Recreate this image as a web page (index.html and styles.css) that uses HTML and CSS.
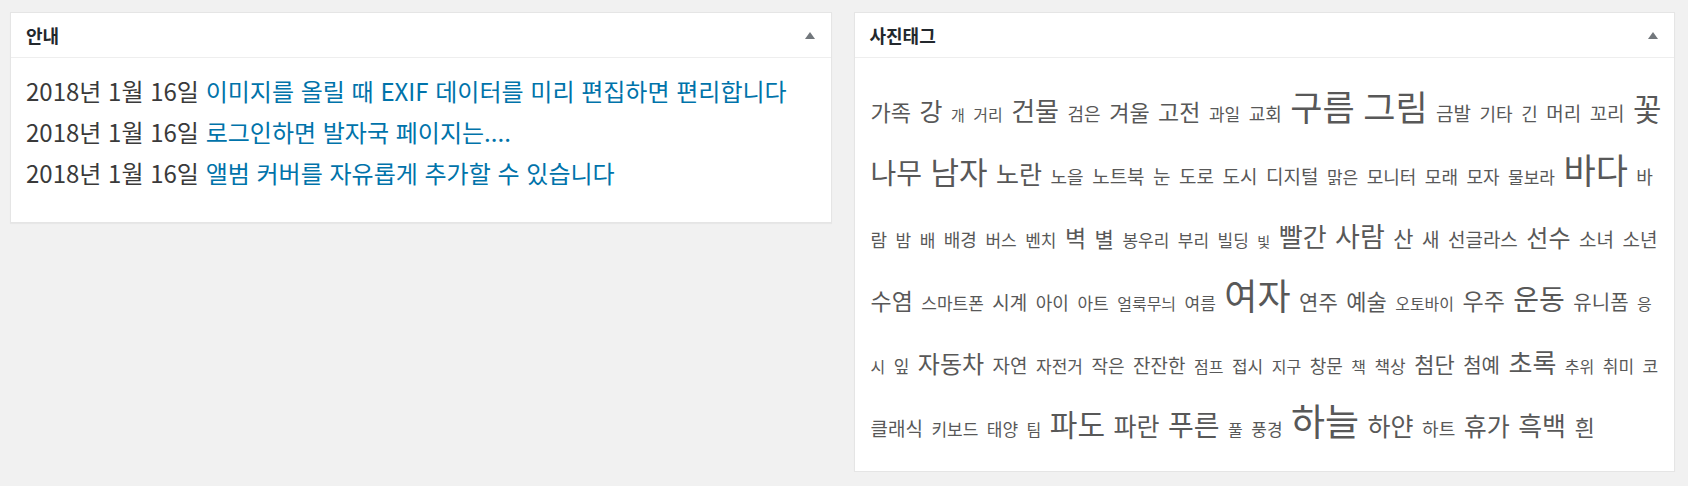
FILE: index.html
```html
<!DOCTYPE html>
<html lang="ko">
<head>
<meta charset="utf-8">
<title>대시보드</title>
<link rel="stylesheet" href="styles.css">
</head>
<body>
<div class="dashboard">
  <section class="postbox">
    <header class="postbox-header">
      <h2 class="postbox-title">안내</h2>
      <span class="toggle-indicator" aria-hidden="true"></span>
    </header>
    <div class="postbox-inside notice-inside">
      <ul class="notice-list">
        <li><span class="notice-date">2018년 1월 16일</span> <a href="#" class="notice-link">이미지를 올릴 때 EXIF 데이터를 미리 편집하면 편리합니다</a></li>
        <li><span class="notice-date">2018년 1월 16일</span> <a href="#" class="notice-link">로그인하면 발자국 페이지는....</a></li>
        <li><span class="notice-date">2018년 1월 16일</span> <a href="#" class="notice-link">앨범 커버를 자유롭게 추가할 수 있습니다</a></li>
      </ul>
    </div>
  </section>

  <section class="postbox">
    <header class="postbox-header">
      <h2 class="postbox-title">사진태그</h2>
      <span class="toggle-indicator" aria-hidden="true"></span>
    </header>
    <div class="postbox-inside tag-inside">
      <div class="tagcloud">
        <a href="#" class="tag" style="font-size:22px">가족</a>
        <a href="#" class="tag" style="font-size:25px">강</a>
        <a href="#" class="tag" style="font-size:15px">개</a>
        <a href="#" class="tag" style="font-size:16px">거리</a>
        <a href="#" class="tag" style="font-size:26px">건물</a>
        <a href="#" class="tag" style="font-size:18px">검은</a>
        <a href="#" class="tag" style="font-size:22px">겨울</a>
        <a href="#" class="tag" style="font-size:23px">고전</a>
        <a href="#" class="tag" style="font-size:17px">과일</a>
        <a href="#" class="tag" style="font-size:18px">교회</a>
        <a href="#" class="tag" style="font-size:35px">구름</a>
        <a href="#" class="tag" style="font-size:35px">그림</a>
        <a href="#" class="tag" style="font-size:19px">금발</a>
        <a href="#" class="tag" style="font-size:18px">기타</a>
        <a href="#" class="tag" style="font-size:18px">긴</a>
        <a href="#" class="tag" style="font-size:19px">머리</a>
        <a href="#" class="tag" style="font-size:19px">꼬리</a>
        <a href="#" class="tag" style="font-size:31px">꽃</a>
        <a href="#" class="tag" style="font-size:28px">나무</a>
        <a href="#" class="tag" style="font-size:31px">남자</a>
        <a href="#" class="tag" style="font-size:25px">노란</a>
        <a href="#" class="tag" style="font-size:18px">노을</a>
        <a href="#" class="tag" style="font-size:19px">노트북</a>
        <a href="#" class="tag" style="font-size:19px">눈</a>
        <a href="#" class="tag" style="font-size:19px">도로</a>
        <a href="#" class="tag" style="font-size:19px">도시</a>
        <a href="#" class="tag" style="font-size:19px">디지털</a>
        <a href="#" class="tag" style="font-size:17px">맑은</a>
        <a href="#" class="tag" style="font-size:18px">모니터</a>
        <a href="#" class="tag" style="font-size:18px">모래</a>
        <a href="#" class="tag" style="font-size:18px">모자</a>
        <a href="#" class="tag" style="font-size:17px">물보라</a>
        <a href="#" class="tag" style="font-size:35px">바다</a>
        <a href="#" class="tag" style="font-size:18px">바람</a>
        <a href="#" class="tag" style="font-size:17px">밤</a>
        <a href="#" class="tag" style="font-size:17px">배</a>
        <a href="#" class="tag" style="font-size:18px">배경</a>
        <a href="#" class="tag" style="font-size:17px">버스</a>
        <a href="#" class="tag" style="font-size:17px">벤치</a>
        <a href="#" class="tag" style="font-size:23px">벽</a>
        <a href="#" class="tag" style="font-size:21px">별</a>
        <a href="#" class="tag" style="font-size:17px">봉우리</a>
        <a href="#" class="tag" style="font-size:17px">부리</a>
        <a href="#" class="tag" style="font-size:17px">빌딩</a>
        <a href="#" class="tag" style="font-size:14px">빛</a>
        <a href="#" class="tag" style="font-size:26px">빨간</a>
        <a href="#" class="tag" style="font-size:27px">사람</a>
        <a href="#" class="tag" style="font-size:22px">산</a>
        <a href="#" class="tag" style="font-size:19px">새</a>
        <a href="#" class="tag" style="font-size:19px">선글라스</a>
        <a href="#" class="tag" style="font-size:24px">선수</a>
        <a href="#" class="tag" style="font-size:19px">소녀</a>
        <a href="#" class="tag" style="font-size:19px">소년</a>
        <a href="#" class="tag" style="font-size:23px">수염</a>
        <a href="#" class="tag" style="font-size:17px">스마트폰</a>
        <a href="#" class="tag" style="font-size:19px">시계</a>
        <a href="#" class="tag" style="font-size:18px">아이</a>
        <a href="#" class="tag" style="font-size:17px">아트</a>
        <a href="#" class="tag" style="font-size:16px">얼룩무늬</a>
        <a href="#" class="tag" style="font-size:17px">여름</a>
        <a href="#" class="tag" style="font-size:36px">여자</a>
        <a href="#" class="tag" style="font-size:21px">연주</a>
        <a href="#" class="tag" style="font-size:22px">예술</a>
        <a href="#" class="tag" style="font-size:16px">오토바이</a>
        <a href="#" class="tag" style="font-size:23px">우주</a>
        <a href="#" class="tag" style="font-size:28px">운동</a>
        <a href="#" class="tag" style="font-size:20px">유니폼</a>
        <a href="#" class="tag" style="font-size:16px">응시</a>
        <a href="#" class="tag" style="font-size:17px">잎</a>
        <a href="#" class="tag" style="font-size:24px">자동차</a>
        <a href="#" class="tag" style="font-size:19px">자연</a>
        <a href="#" class="tag" style="font-size:17px">자전거</a>
        <a href="#" class="tag" style="font-size:18px">작은</a>
        <a href="#" class="tag" style="font-size:19px">잔잔한</a>
        <a href="#" class="tag" style="font-size:16px">점프</a>
        <a href="#" class="tag" style="font-size:17px">접시</a>
        <a href="#" class="tag" style="font-size:16px">지구</a>
        <a href="#" class="tag" style="font-size:18px">창문</a>
        <a href="#" class="tag" style="font-size:16px">책</a>
        <a href="#" class="tag" style="font-size:17px">책상</a>
        <a href="#" class="tag" style="font-size:22px">첨단</a>
        <a href="#" class="tag" style="font-size:20px">첨예</a>
        <a href="#" class="tag" style="font-size:26px">초록</a>
        <a href="#" class="tag" style="font-size:16px">추위</a>
        <a href="#" class="tag" style="font-size:17px">취미</a>
        <a href="#" class="tag" style="font-size:17px">코</a>
        <a href="#" class="tag" style="font-size:19px">클래식</a>
        <a href="#" class="tag" style="font-size:17px">키보드</a>
        <a href="#" class="tag" style="font-size:17px">태양</a>
        <a href="#" class="tag" style="font-size:16px">팀</a>
        <a href="#" class="tag" style="font-size:30px">파도</a>
        <a href="#" class="tag" style="font-size:25px">파란</a>
        <a href="#" class="tag" style="font-size:28px">푸른</a>
        <a href="#" class="tag" style="font-size:16px">풀</a>
        <a href="#" class="tag" style="font-size:17px">풍경</a>
        <a href="#" class="tag" style="font-size:37px">하늘</a>
        <a href="#" class="tag" style="font-size:25px">하얀</a>
        <a href="#" class="tag" style="font-size:18px">하트</a>
        <a href="#" class="tag" style="font-size:25px">휴가</a>
        <a href="#" class="tag" style="font-size:26px">흑백</a>
        <a href="#" class="tag" style="font-size:22px">흰</a>
      </div>
    </div>
  </section>
</div>
</body>
</html>
```

FILE: styles.css
```css
html, body {
  margin: 0;
  padding: 0;
  background: #f1f1f1;
}

body {
  font-family: "Noto Sans CJK KR", "Noto Sans", sans-serif;
  color: #3a3a3a;
}

.dashboard {
  display: grid;
  grid-template-columns: 1fr 1fr;
  column-gap: 22px;
  align-items: start;
  padding: 12px 13px 0 10px;
}

.postbox {
  background: #fff;
  border: 1px solid #e5e5e5;
  box-shadow: 0 1px 1px rgba(0, 0, 0, 0.04);
}

.postbox-header {
  display: flex;
  align-items: center;
  height: 44px;
  padding: 0 16px 0 15px;
  border-bottom: 1px solid #eee;
}

.postbox-title {
  margin: 0;
  font-size: 18px;
  font-weight: 700;
  color: #23282d;
  line-height: 1;
}

.toggle-indicator {
  margin-left: auto;
  width: 0;
  height: 0;
  border-left: 5px solid transparent;
  border-right: 5px solid transparent;
  border-bottom: 7px solid #72777c;
}

.notice-inside {
  padding: 12px 15px 29px;
}

.notice-list {
  list-style: none;
  margin: 0;
  padding: 0;
  font-size: 24px;
  line-height: 41px;
}

.notice-date {
  color: #3a3a3a;
}

.notice-link {
  color: #0073aa;
  text-decoration: none;
}

.tag-inside {
  padding: 25px 11px 10px 16px;
}

.tagcloud {
  font-size: 16px;
  line-height: 63px;
  word-spacing: 4px;
}

.tag {
  color: #585858;
  text-decoration: none;
  line-height: 1;
}
```
